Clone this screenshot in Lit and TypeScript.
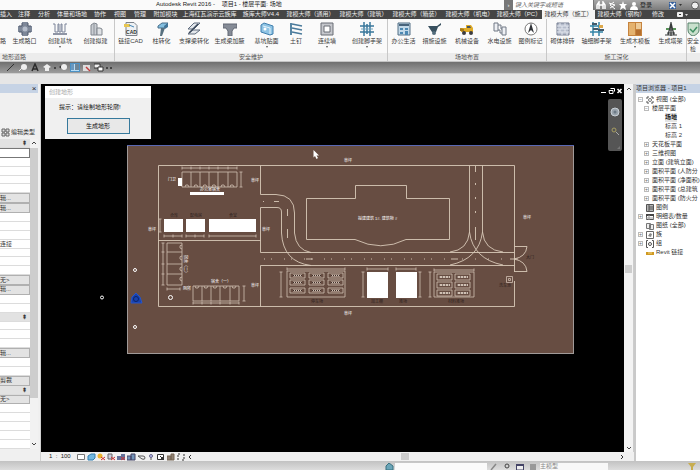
import { LitElement, html, css, svg, nothing } from "lit";
import { customElement, property } from "lit/decorators.js";
import { classMap } from "lit/directives/class-map.js";

const icons: Record<string, unknown> = {
  crossing: svg`<path d="M4 0h6v4h4v6h-4v4H4v-4H0V4h4z" fill="#7d8798"/><circle cx="7" cy="7" r="2.5" fill="#b5bdcb"/><path d="M4 1v3M10 1v3M1 4h3M10 4h3M1 10h3M10 10h3M4 10v3M10 10v3" stroke="#4d566b" fill="none"/>`,
  pit: svg`<path d="M0 2h2v8h3V2h1v8h2V2h1v8h3V2h2" fill="none" stroke="#7b8398"/><path d="M0 12h14" stroke="#6b7388" stroke-width="1.5"/>`,
  building: svg`<path d="M2 13V3l3-2 3 1v11z" fill="#c9cdd2" stroke="#80868e"/><path d="M8 13V6h3l2 1v6z" fill="#dfe2e5" stroke="#80868e"/><path d="M5 2v11" stroke="#8a9098"/>`,
  cad: svg`<path d="M2 .5h8l3 3v10H2z" fill="#eef1f4" stroke="#7d838b"/><path d="M0 2h6v3H0z" fill="#e8c650"/><path d="M5 3l5 2" stroke="#4687b8"/><text x="7.500" y="12" text-anchor="middle" font-size="5" font-weight="700" fill="#333">CAD</text>`,
  column: svg`<path d="M3 4l4-3h6l-3 3v2H3z" fill="#83bfe0" stroke="#496f8b"/><path d="M6 6h4L7 14H5z" fill="#57707f"/><path d="M9 4l4-3v4l-3 2z" fill="#427598"/>`,
  brace: svg`<path d="M1 7l6-6h6l-6 6zM1 12l5-4h7l-5 4z" fill="#e3e7ec" stroke="#5e6b7d"/><path d="M2 11l9-9" stroke="#3c4a5d" stroke-width="1.500"/>`,
  haunch: svg`<path d="M0 2h14v4h-3l-2 3v5H5V9L3 6H0z" fill="#858b96" stroke="#626975"/>`,
  facing: svg`<path d="M1 3l3-2 9 3v8l-3 1-9-3z" fill="#8fc4e4" stroke="#3f7fae"/><path d="M3 4l7 2v6" fill="none" stroke="#e4f2fa"/><circle cx="5" cy="7" r="1.500" fill="#fff"/>`,
  nail: svg`<path d="M2 1v12" stroke="#5886a4" stroke-width="2"/><path d="M3 2l10 2M3 6l10 2M3 10l10 2" stroke="#4a7a9b" stroke-width="1.500"/>`,
  wall: svg`<path d="M1 1h12v12H1z" fill="#c5c7cc" stroke="#686c75"/><path d="M4 4h6v6H4z" fill="#fff" stroke="#686c75"/>`,
  scaffold: svg`<path d="M4 0v14M10 0v14M0 4h14M0 10h14M7 2v10" stroke="#3a789c" stroke-width="1.500"/><path d="M1 7h12" stroke="#70a3bd"/>`,
  office: svg`<path d="M1 1h12v12H1z" fill="#c2d9e9" stroke="#526e84"/><path d="M2 3h10" stroke="#48647c" stroke-width="2"/><path d="M3 6h3v2H3zM8 6h3v2H8zM3 10h3v2H3zM8 9h3v4H8z" fill="#4d88b2"/>`,
  facility: svg`<path d="M0 4h9l4-3v2l-3 2-2 5H4z" fill="#38505f"/><circle cx="6" cy="11" r="2" fill="#526c7b"/>`,
  machine: svg`<path d="M1 6h5V3h5l2 3v4H1z" fill="#e0ac28"/><path d="M7 4h3l1 2H7z" fill="#465461"/><path d="M0 6l4 1v2H0z" fill="#a57917"/><circle cx="4" cy="11" r="2" fill="#3c3d40"/><circle cx="11" cy="11" r="2" fill="#3c3d40"/>`,
  hydro: svg`<path d="M1 1h4v8H1zM9 5h4v8H9zM5 3h3v4h1M5 8h2v3h2" fill="#eef0f4" stroke="#707885"/>`,
  north: svg`<circle cx="7" cy="7" r="6" fill="#fff" stroke="#777"/><path d="M7 1l3 10-3-3-3 3z" fill="#303338"/>`,
  masonry: svg`<path d="M1 1h12v12H1z" fill="#b5bccb" stroke="#767e92"/><path d="M1 4h12M1 7h12M1 10h12M4 1v3M9 1v3M6 4v3M11 4v3M4 7v3M9 7v3M6 10v3M11 10v3" stroke="#e1e5ed"/>`,
  plan: svg`<path d="M3 0v14M9 0v14M0 4h13M0 10h13" stroke="#3485a8" stroke-width="1.500"/><path d="M2 2h5M8 8h6M3 7h5" stroke="#43596a" stroke-width="2"/><path d="M9 3h4v3H9z" fill="#dda84b"/>`,
  formwork: svg`<path d="M0 0h14v14H0z" fill="#c6833e"/><path d="M1 1h6v12H1z" fill="#e4b26e"/><path d="M8 1h5v6H8z" fill="#eccb99"/><path d="M8 8h5v5H8z" fill="#b56f2e"/>`,
  tower: svg`<path d="M7 0v14M4 13l3-12 3 12M1 13h12M5 8h4M3 11h8" fill="none" stroke="#383c3c" stroke-width="1.200"/><path d="M2 7h3M9 7h3" stroke="#569257" stroke-width="2"/>`,
  check: svg`<path d="M2 1h11v7c0 3-3 5-6 6-3-1-5-3-5-6z" fill="#c9e0cd" stroke="#56816b"/><path d="M4 7l3 3 4-5" fill="none" stroke="#3f8f62" stroke-width="1.500"/>`,
};

@customElement("ribbon-tool")
export class RibbonTool extends LitElement {
  @property() icon = "";
  @property() label = "";
  @property({ type: Boolean }) menu = false;
  static styles = css`
    :host { display: block; flex: none; }
    button { display: flex; flex-direction: column; align-items: center; width: 100%; height: 100%; border: 0; padding: 3px 0 0; background: none; font: 6px/8px "Liberation Sans", "Noto Sans CJK SC", sans-serif; color: #3c3c3c; white-space: pre; }
    svg { width: 14px; height: 14px; margin-bottom: 1px; flex: none; }
    i { border: 1px solid transparent; border-top: 2px solid #555; border-bottom: 0; margin-top: 1px; }
  `;
  render() {
    return html`<button><svg viewBox="0 0 14 14">${icons[this.icon]}</svg><span>${this.label}</span>${this.menu ? html`<i></i>` : nothing}</button>`;
  }
}

type Tool = [icon: string, label: string, size: string, menu?: boolean];
const panels: { title: string; cls: string; tools: Tool[] }[] = [
  { title: "地形道路", cls: "first", tools: [["", "路", "cut"], ["crossing", "生成路口", "l"], ["pit", "创建基坑", "m", true], ["building", "创建拟建", "l"]] },
  { title: "安全维护", cls: "", tools: [["cad", "链接CAD", "s"], ["column", "柱转化", "s"], ["brace", "支撑梁转化", "m"], ["haunch", "生成梁加腋", "l"], ["facing", "基坑贴面", "l", true], ["nail", "土钉", "xs"], ["wall", "连续墙", "xl", true], ["scaffold", "创建脚手架", "xl", true]] },
  { title: "场地布置", cls: "", tools: [["office", "办公生活", "s"], ["facility", "措施设施", "s"], ["machine", "机械设备", "m"], ["hydro", "水电设施", "s"], ["north", "图例标记", "s"]] },
  { title: "施工深化", cls: "", tools: [["masonry", "砌体排砖", "s"], ["plan", "轴细脚手架", "l"], ["formwork", "生成木模板", "xl", true], ["tower", "生成塔架", "s"]] },
  { title: "", cls: "last", tools: [["check", "安全\n检", "edge"]] },
];

const tabs = ["插入", "注释", "分析", "体量和场地", "协作", "视图", "管理", "附加模块", "上海红瓦演示云族库", "族库大师V4.4", "建模大师（通用）", "建模大师（建筑）", "建模大师（箱装）", "建模大师（机电）", "建模大师（PC）", "建模大师（施工）", "建模大师（钢构）", "修改"];
const activeTab = "建模大师（施工）";

const props: [kind: string, text?: string][] = [
  ["head"], ["field"], ["row"], ["row"], ["row"], ["row"], ["btn", "辑..."], ["btn", "辑..."], ["row"], ["row"], ["row"],
  ["row", "连接"], ["row"], ["row"], ["row"], ["btn", "无>"], ["btn", "辑..."], ["row"], ["row"], ["head"], ["row"], ["row"], ["row"],
  ["btn", "辑..."], ["row"], ["row"], ["btn", "剪裁"], ["head"], ["btn", "无>"], ["row"], ["row"], ["row"], ["row"], ["row"],
];

type Node = [level: number, mark: string, glyph: string, text: string];
const tree: Node[] = [
  [0, "−", "views", "视图 (全部)"], [1, "−", "", "楼层平面"], [2, "", "", "场地"], [2, "", "", "标高 1"], [2, "", "", "标高 2"],
  [1, "+", "", "天花板平面"], [1, "+", "", "三维视图"], [1, "+", "", "立面 (建筑立面)"], [1, "+", "", "面积平面 (人防分"],
  [1, "+", "", "面积平面 (净面积)"], [1, "+", "", "面积平面 (总建筑"], [1, "+", "", "面积平面 (防火分"],
  [0, "", "legend", "图例"], [0, "+", "table", "明细表/数量"], [0, "", "sheet", "图纸 (全部)"], [0, "+", "family", "族"], [0, "+", "group", "组"], [0, "", "link", "Revit 链接"],
];
const treeGlyphs: Record<string, unknown> = {
  views: svg`<path d="M1 3V1h2M5 1h2v2M7 5v2H5M3 7H1V5" fill="none" stroke="#555"/><circle cx="4" cy="4" r="1.500" fill="none" stroke="#777"/>`,
  legend: svg`<path d="M.5.5h7v7h-7z" fill="#b5b5b5" stroke="#555"/><path d="M3 1v6M3 3h4M3 5h4" stroke="#555"/>`,
  table: svg`<path d="M.5 1.500h7v5h-7z" fill="#fff" stroke="#555"/><path d="M0 2h8" stroke="#444" stroke-width="2"/><path d="M3 2v5M0 5h8" stroke="#999"/>`,
  sheet: svg`<path d="M.5 1.500h4v5h-4zM3.500 2.500h4v5h-4z" fill="#eee" stroke="#777"/>`,
  family: svg`<path d="M.5.5h7v7h-7z" fill="#fff" stroke="#666"/><path d="M2 5l2-3 2 1-1 3z" fill="#888"/>`,
  group: svg`<path d="M2 .5H.5v7H2M6 .5h1.500v7H6" fill="none" stroke="#555"/><circle cx="4" cy="4" r="1.500" fill="none" stroke="#555"/>`,
  link: svg`<path d="M0 3h8v3H0z" fill="#d09a22"/><path d="M2 4h4" stroke="#f0d588"/>`,
};

const range = (n: number) => Array.from({ length: n }, (_, i) => i);
const at = (list: number[], draw: (v: number) => string) => list.map(draw).join("");

/* A dimension line with end ticks and optional inner ticks. */
const dimH = (y: number, xs: number[]) => `M${xs[0]} ${y}H${xs[xs.length - 1]}` + at(xs, (x) => `M${x} ${y - 1.5}v3`);
const dimV = (x: number, ys: number[]) => `M${x} ${ys[0]}V${ys[ys.length - 1]}` + at(ys, (y) => `M${x - 1.5} ${y}h3`);

const site = () => svg`
  <rect x="127.5" y="145.5" width="446" height="208" fill="#674d42" stroke="#a09a98"/>
  <path d="M127 145.500H574" stroke="#5968b4"/>
  <g fill="none" stroke="#d8c8b8" stroke-width="0.9">
    <path d="M514.500 246V165.500H158.500V306.500H514.500V281M158.500 240.500H260.500M260.500 165.500V194.500H276Q294.500 195 294.500 213V233Q296 250 311 252.500M260.500 252.500V207.500H277Q281.500 207.500 281.500 212V233Q283 262 311 265.500M260.500 252.500H514.500M514.500 265.500H260.500V306.500"/>
    <path d="M306.500 198.500H355.500V185.500H406.500V198.500H449.500V239.500H406Q381 252 355 239.500H306.500Z"/>
    <path d="M469.500 165.500V232Q468 250 450 252M469.500 232Q473 259 503 265M482.500 165.500V232Q484 250 503 252M482.500 232Q479 259 450 265"/>
    <path d="M514.500 246V272M514.500 246.500H527Q526 257 514 259Q526 261 527 271.500H514.500M510 259H518"/>
    <path d="M475.500 166v6M475.500 183v2M475.500 197v2M475.500 211v2M475.500 227v13M274 201.500h5M287.500 209v7M287.500 229v9M306 259h7M451 259h7M263 201.500h1"/>
    <path d="M264 259H450" stroke-dasharray="1 6 1 12"/>
    <path d="M462 259H510" stroke-dasharray="1 12"/>
  </g>
  <g fill="none" stroke="#d0c0b3" stroke-width="0.8">
    <path d="M182 172H237V187H182Z${at([191, 200, 209, 218, 228], (x) => `M${x} 172v15`)}${dimH(168, [182, 191, 200, 209, 218, 228, 237])}${dimV(241, [172, 187])}"/>
    <path d="${at([187, 196, 205, 214, 223, 232], (x) => `M${x - 2} 187q0 -3 3 -2l1 2`)}"/>
    <path d="M167 243H182V285H167Z${at([252, 264, 274], (y) => `M167 ${y}h15`)}${dimV(163, [243, 252, 264, 274, 285])}${dimH(289, [167, 180])}"/>
    <path d="${at([247, 258, 269, 279], (y) => `M182 ${y - 2}q-3 0 -2 3l2 1`)}"/>
    <path d="M193 286H239V301H193Z${at([202, 211, 220, 230], (x) => `M${x} 286v15`)}${dimH(303, [193, 202, 211, 220, 230, 239])}${dimV(244, [286, 301])}"/>
    <path d="${at([197, 206, 215, 225, 234], (x) => `M${x - 2} 286q0 3 3 2l1 -2`)}"/>
    <path d="${dimV(160, [219, 232])}${dimH(236, [164, 173, 182])}${dimH(236, [186, 195, 204])}${dimH(236, [209, 256])}"/>
    <path d="M287 271H345V297H287Z${dimH(269, [287, 345])}${dimV(281, [272, 297])}"/>
    <path d="M434 272H474V297H434Z${dimH(270, [434, 474])}${dimV(430, [272, 297])}"/>
    <path d="${dimH(269, [367, 388])}${dimH(269, [396, 416])}${dimV(363, [272, 297])}${dimV(420, [272, 297])}"/>
    <path d="M506.500 276.500h6v6h-6zM508.500 278.500h2v2h-2z"/>
    ${range(9).map((i) => svg`<g transform="translate(${290 + (i % 3) * 19} ${[273, 280, 288][Math.floor(i / 3)]})"><path d="M0 0h15v5h-15z"/><path d="M3 2.500h9" stroke-width="2"/><path d="M3 2.500h9" stroke="#3d2d28" stroke-width="1" stroke-dasharray="1 1"/></g>`)}
    ${range(6).map((i) => svg`<g transform="translate(${437 + (i % 2) * 18} ${274 + Math.floor(i / 2) * 8})"><path d="M0 0h15v6h-15z"/><path d="M2 3h11" stroke-width="2"/><path d="M2 3h11" stroke="#3d2d28" stroke-width="1" stroke-dasharray="1 2"/></g>`)}
  </g>
  <path d="M178 178h4v8h-4zM190 192h34v3h-34zM164 219h19v13h-19zM186 219h19v13h-19zM209 219h47v13h-47zM367 272h21v26h-21zM396 272h21v26h-21z" fill="#fff"/>
  <g class="note">
    <text x="344" y="162">草坪</text><text x="523" y="219">草坪</text><text x="344" y="315">草坪</text><text x="251" y="182">草坪</text>
    <text x="148" y="231">草坪</text><text x="262" y="231">草坪</text><text x="251" y="287">草坪</text><text x="168" y="181">门卫</text>
    <text x="200" y="191">办公室宿舍</text><text x="211" y="283">宿舍（一）</text>
    <text x="358" y="220">拟建建筑 1#. 建筑物 #</text>
    <text transform="translate(184 255) rotate(90)">宿舍（二）</text><text x="183" y="290">厕所</text>
  </g>
  <g class="note dark">
    <text x="170" y="217">仓库</text><text x="190" y="217">配电房</text><text x="229" y="217">食堂</text><text x="311" y="303">停车场</text>
    <text x="371" y="303">加工棚</text><text x="399" y="303">堆场</text><text x="448" y="303">材料堆场</text><text x="499" y="287">洗车池</text><text x="526" y="259">大门</text>
  </g>
  <g fill="#674d42" stroke="#fff"><circle cx="135" cy="270" r="1.5"/><circle cx="135" cy="327" r="1.5"/><circle cx="102" cy="297.500" r="1.5" fill="#000"/><circle cx="170.500" cy="297.500" r="2"/></g>
  <path d="M131 303L132 297L136 293L140 297L142 303Z" fill="#1741ae" stroke="#2655c8"/><circle cx="136" cy="299" r="2.500" fill="none" stroke="#0b2468"/>
  <path d="M313.500 150V157.500L315 156L316.500 159L318 158L316.500 155.500H319Z" fill="#fff"/>
`;

@customElement("app-root")
export class AppRoot extends LitElement {
  static styles = css`
    * { box-sizing: border-box; }
    :host { display: flex; flex-direction: column; min-height: 100vh; background: #f0f0f0; color: #333; font: 6px/9px "Liberation Sans", "Noto Sans CJK SC", sans-serif; white-space: nowrap; overflow: hidden; }
    button, input, select { font: inherit; color: inherit; border: 0; padding: 0; margin: 0; border-radius: 0; background: none; }
    svg { display: block; flex: none; }
    .title { display: flex; height: 10px; background: #fafafa; }
    .title h1 { flex: 1; margin: 0; padding-left: 156px; font-size: 6px; line-height: 9px; font-weight: 400; color: #222; white-space: pre; }
    .search { display: flex; width: 90px; background: #777; }
    .search button { width: 9px; color: #fff; line-height: 9px; }
    .search input { width: 80px; padding-left: 2px; background: #fff; font-style: italic; }
    .search input::placeholder { color: #666; }
    .account { display: flex; align-items: center; width: 106px; padding-left: 2px; gap: 1px; background: linear-gradient(#a8a8a8, #7b7b7b); }
    .account svg { width: 10px; height: 9px; }
    .account button { color: #222; }
    .account .push { margin-left: auto; }
    .tabs { display: grid; grid-template-columns: 14px 20px 20px 36px 20px 20px 20px 31px 57px 46px repeat(4, 53px) 46px 53px 53px 20px 1fr; height: 9px; background: #454545; }
    .tabs button { color: #ededed; text-align: center; line-height: 9px; }
    .tabs button.on { background: #f4f4f4; color: #333; }
    .tabs button:first-child { text-align: left; }
    .tabs svg { width: 12px; height: 9px; margin-left: 8px; }
    .ribbon { display: flex; height: 43px; background: #fafafa; overflow: hidden; border-bottom: 1px solid #c4c4c4; }
    .panel { display: flex; flex-direction: column; flex: none; border-right: 1px solid #c8c8c8; }
    .panel.last { flex: 1 0 0; min-width: 0; border: 0; }
    .tools { display: flex; flex: 1; }
    .panel h2 { margin: 0; height: 8px; font-size: 6px; line-height: 8px; font-weight: 400; text-align: center; background: #ececec; color: #555; }
    .panel.first h2 { padding-left: 2px; text-align: left; }
    .cut { width: 6px; overflow: hidden; } .edge { width: 12px; }
    .xs { width: 22px; } .s { width: 31px; } .m { width: 34px; } .l { width: 37px; } .xl { width: 40px; }
    .quick { display: flex; align-items: center; gap: 2px; height: 11px; padding-left: 6px; background: linear-gradient(#6f6f6f, #9d9d9d); color: #333; }
    .quick svg { width: 10px; height: 9px; }
    .quick .on { background: #b7dcf5; outline: 1px solid #4c91c4; outline-offset: -1px; }
    .quick i { width: 2px; height: 2px; background: #444; }
    .strip { height: 11px; background: #e6e6e6; border-top: 1px solid #cfcfcf; }
    .work { display: grid; grid-template-columns: 41px minmax(0, 1fr) 66px; flex: 1; }
    .props { display: flex; flex-direction: column; padding: 0 2px 12px 0; border-right: 1px solid #d0d0d0; }
    .bar { display: flex; height: 9px; background: #c6d3e5; }
    .bar h2 { flex: 1; margin: 0; font-size: 6px; line-height: 9px; font-weight: 400; }
    .bar button { width: 8px; color: #222; font-size: 8px; line-height: 8px; }
    .type { display: flex; align-items: center; justify-content: flex-end; height: 46px; padding: 33px 3px 0 0; gap: 1px; }
    .type svg { width: 9px; height: 9px; }
    .sheet { display: flex; flex: 1; }
    .rows { display: flex; flex-direction: column; flex: 1; min-width: 0; }
    .rows > * { flex: 1 1 0; min-height: 0; width: 100%; overflow: hidden; background: #fff; border-bottom: 1px solid #dcdcdc; line-height: 8px; }
    .rows .head { background: #e2e2e2; text-align: right; padding-right: 3px; font-weight: 700; }
    .rows .field { border: 1px solid #777; border-left: 0; }
    .rows .btn { background: #e3e3e3; border: 1px solid #b0b0b0; border-left: 0; text-align: left; line-height: 7px; }
    .scroll { display: flex; flex-direction: column; align-items: center; width: 8px; background: #f2f2f2; color: #444; }
    .scroll svg { width: 8px; height: 9px; }
    .scroll .thumb { width: 100%; background: #cdcdcd; }
    .scroll .tall { flex: 6; } .scroll .rest { flex: 1; }
    .center { display: flex; flex-direction: column; }
    .stage { display: flex; flex: 1; }
    .canvas { position: relative; flex: 1; min-width: 0; background: #000; }
    .drawing { width: 100%; height: auto; }
    .note { fill: #fff; font-size: 4px; } .note.dark { fill: #2e211d; }
    .dialog { position: absolute; left: 4px; top: 2px; width: 106px; height: 53px; background: #f0f0f0; text-align: center; }
    .dialog h2 { margin: 0; height: 12px; padding-left: 4px; background: #fff; color: #aaa; font-size: 6px; line-height: 12px; font-weight: 400; text-align: left; }
    .dialog p { margin: 0; padding: 5px 0 6px 14px; text-align: left; color: #111; }
    .dialog button { width: 63px; height: 16px; border: 1px solid #36799c; background: #e8e8e8; color: #111; }
    .win { position: absolute; right: 0; top: 3px; display: flex; }
    .win svg { width: 8px; height: 8px; }
    .nav { position: absolute; right: 2px; top: 15px; width: 14px; height: 52px; background: #555; border-radius: 2px; }
    .vs { width: 10px; background: #f3f3f3; border-right: 1px solid #ccc; }
    .vs .gap { flex: 172; } .vs .below { flex: 170; } .vs .thumb { flex: none; height: 8px; width: 7px; }
    .view { display: flex; align-items: center; height: 9px; padding-left: 8px; background: #f0f0f0; }
    .view .scale { width: 28px; white-space: pre; color: #222; }
    .view svg { width: 9px; height: 8px; margin-right: 1px; }
    .view .track { flex: 1; display: flex; align-items: center; }
    .view .before { flex: 211; } .view .after { flex: 215; }
    .view .thumb { width: 8px; height: 7px; background: #ccc; }
    .view .end { margin-right: 8px; }
    .browser { background: #fff; border-left: 2px solid #c9c9c9; overflow: hidden; }
    .browser ul { margin: 0; padding: 2px 0 0 1px; list-style: none; }
    .browser li { display: flex; align-items: center; height: 9px; }
    .browser li svg { width: 8px; height: 8px; margin-right: 2px; }
    .browser .mark { width: 5px; height: 5px; margin: 0 3px 0 1px; border: 1px solid #bbb; font-size: 5px; line-height: 3px; color: #666; flex: none; }
    .browser .mark.none { border-color: transparent; }
    .browser .lv1 { padding-left: 6px; } .browser .lv2 { padding-left: 19px; }
    .sel { background: #e4e4e4; font-weight: 700; color: #222; }
    .status { display: flex; align-items: flex-end; height: 9px; padding-left: 385px; background: linear-gradient(#c2c2c2, #ddd); }
    .status svg { width: 10px; height: 7px; }
    .status input { width: 92px; height: 7px; background: #fafafa; }
    .status select { appearance: none; width: 68px; height: 7px; line-height: 7px; background: #f8f8f8; color: #888; }
    .status .ico { display: flex; width: 53px; justify-content: space-around; }
    .status .filter { margin: 0 3px 0 auto; }
  `;

  private chevron(d: string) {
    return html`<svg viewBox="0 0 8 9"><path d=${d} fill="none" stroke="#444"/></svg>`;
  }

  private ribbon() {
    return html`<section class="ribbon">${panels.map((p) => html`
      <div class="panel ${p.cls}"><div class="tools">${p.tools.map(([icon, label, size, menu]) => html`<ribbon-tool class=${size} icon=${icon} label=${label} ?menu=${menu}></ribbon-tool>`)}</div><h2>${p.title}</h2></div>`)}</section>`;
  }

  private property([kind, text]: [string, string?]) {
    if (kind === "field") return html`<input class="field" aria-label="类型">`;
    if (kind === "btn") return html`<button class="btn">${text}</button>`;
    return html`<div class=${kind}>${kind === "head" ? "⇞" : text}</div>`;
  }

  render() {
    return html`
      <header class="title">
        <h1>Autodesk Revit 2016 -    项目1 - 楼层平面: 场地</h1>
        <div class="search"><button aria-label="展开">›</button><input aria-label="搜索" placeholder="键入关键字或短语"></div>
        <div class="account">
          <svg viewBox="0 0 10 9"><path d="M1 8V4l2-3v7M9 8V4L7 1v7M3 4h4" fill="none" stroke="#fff" stroke-width="1.500"/></svg>
          <svg viewBox="0 0 10 9"><path d="M2 2l6 2-5 3M7 1L3 4l5 4" fill="none" stroke="#fff"/></svg>
          <svg viewBox="0 0 10 9"><path d="M5 0l1 3h3L7 5l1 4-3-2-3 2 1-4-2-2h3z" fill="#fff"/></svg>
          <svg viewBox="0 0 10 9"><circle cx="5" cy="3" r="2" fill="#fff"/><path d="M1 9q0-4 4-4t4 4z" fill="#fff"/></svg>
          <button>登录</button>
          <svg class="push" viewBox="0 0 10 9"><path d="M1 1h7v7H1z" fill="#36609b"/><path d="M2 2l5 5M7 2L2 7" stroke="#fff" stroke-width="1.500"/></svg>
          <svg viewBox="0 0 10 9"><path d="M0 3h3L1.500 5z" fill="#333"/></svg>
          <svg viewBox="0 0 10 9"><circle cx="5" cy="4.500" r="3.500" fill="#eee" stroke="#555"/></svg>
        </div>
      </header>
      <nav class="tabs">
        ${tabs.map((t) => html`<button class=${classMap({ on: t === activeTab })}>${t}</button>`)}
        <svg viewBox="0 0 12 9"><rect x="1" y="2" width="6" height="5" rx="1" fill="#eee"/><path d="M3 4h2v1H3z" fill="#333"/><path d="M9 4h3l-1.500 2z" fill="#ddd"/></svg>
      </nav>
      ${this.ribbon()}
      <div class="quick">
        <svg viewBox="0 0 10 9"><path d="M1 8l7-7" stroke="#333"/></svg>
        <svg viewBox="0 0 10 9"><circle cx="6" cy="4" r="3" fill="#eee"/><path d="M1 8l4-4" stroke="#eee"/></svg>
        <svg viewBox="0 0 10 9"><path d="M2 8l3-7 3 7M3 6h4" fill="none" stroke="#2b2b2b" stroke-width="1.500"/></svg>
        <svg viewBox="0 0 10 9"><path d="M1 4l4-3 4 3-2 1v3H3V5z" fill="#eee"/></svg><i></i>
        <svg viewBox="0 0 10 9"><path d="M1 4l4-3v6z" fill="#333"/><circle cx="6" cy="4" r="3" fill="#eee"/></svg>
        <svg class="on" viewBox="0 0 10 9"><path d="M1 2h3M1 4h3M1 6h3" stroke="#1c548b"/><path d="M5 2h4M5 4h4M5 6h4" stroke="#27313c"/></svg>
        <svg viewBox="0 0 10 9"><path d="M1 2h7v6H1z" fill="#ddd"/><path d="M4 4l4 4" stroke="#c13d3d" stroke-width="1.500"/></svg>
        <svg viewBox="0 0 10 9"><path d="M0 1h6v4H0z" fill="#eee" stroke="#333"/><path d="M4 4h5v4H4z" fill="#fff" stroke="#333"/></svg><i></i><i></i>
      </div>
      <div class="strip"></div>
      <main class="work">
        <aside class="props">
          <div class="bar"><h2></h2><button aria-label="关闭">×</button></div>
          <div class="type"><svg viewBox="0 0 9 9"><path d="M1 1h3v3H1zM5 1h3v3H5zM1 5h3v3H1zM5 5h3v3H5z" fill="#ddd" stroke="#666"/></svg><button>编辑类型</button></div>
          <div class="sheet">
            <div class="rows">${props.map((p) => this.property(p))}</div>
            <div class="scroll">${this.chevron("M2 5l2-2 2 2")}<div class="thumb tall"></div><div class="rest"></div>${this.chevron("M2 3l2 2 2-2")}</div>
          </div>
        </aside>
        <section class="center">
          <div class="stage">
            <div class="canvas">
              <svg class="drawing" viewBox="41 84 583 368">${site()}</svg>
              <div class="dialog"><h2>创建地形</h2><p>提示：请绘制地形轮廓!</p><button>生成地形</button></div>
              <div class="win">
                <svg viewBox="0 0 8 8"><path d="M1 5.500h5" stroke="#fff"/></svg>
                <svg viewBox="0 0 8 8"><path d="M2.500 1.500h4v3M1 3.500h4v3H1.500z" fill="none" stroke="#fff"/></svg>
                <svg viewBox="0 0 8 8"><path d="M1.500 2l4 4M5.500 2l-4 4" stroke="#fff" stroke-width="1.500"/></svg>
              </div>
              <svg class="nav" viewBox="0 0 14 52"><circle cx="7" cy="13" r="4" fill="#9aa4ad" stroke="#c8d0d6"/><circle cx="7" cy="13" r="1.500" fill="#6c7a86"/><circle cx="6" cy="31" r="2" fill="none" stroke="#a79d62"/><path d="M8 33l3 3" stroke="#aaa"/><path d="M9 50h3v-3z" fill="#777"/></svg>
            </div>
            <div class="scroll vs">${this.chevron("M2 6l2-2 2 2")}<div class="gap"></div><div class="thumb"></div><div class="below"></div>${this.chevron("M2 4l2 2 2-2")}</div>
          </div>
          <div class="view">
            <span class="scale">1  :  100</span>
            <svg viewBox="0 0 9 8"><path d="M.5 1.500h7v5h-7z" fill="#fff" stroke="#777"/></svg>
            <svg viewBox="0 0 9 8"><path d="M1 3l3-2h4v4L6 7H1z" fill="#71b7df" stroke="#337faf"/></svg>
            <svg viewBox="0 0 9 8"><circle cx="3" cy="3" r="2.500" fill="#edb42d"/><path d="M4 4l4 3M8 4L4 7" stroke="#c33"/></svg>
            <svg viewBox="0 0 9 8"><path d="M1 1h4v5H1z" fill="#ccd" stroke="#666"/><path d="M4 4l4 3M8 4L4 7" stroke="#c33"/></svg>
            <svg viewBox="0 0 9 8"><path d="M0 3h5v4H0zM4 1h4v6H4z" fill="#637199"/><path d="M4 4l4 3M8 4L4 7" stroke="#c33"/></svg>
            <svg viewBox="0 0 9 8"><path d="M0 3h4v4H0zM4 1h4v6H4z" fill="#7294b8" stroke="#446"/></svg>
            <svg viewBox="0 0 9 8"><path d="M1 3h5q2 0 2 2t-3 1L1 3" fill="none" stroke="#555"/></svg>
            <svg viewBox="0 0 9 8"><circle cx="4" cy="3" r="1.500" fill="#bbe" stroke="#668"/><path d="M4 5v2" stroke="#555"/></svg>
            <svg viewBox="0 0 9 8"><path d="M.5 1.500h6v5h-6z" fill="#fff" stroke="#333"/><path d="M3 3l4 4M7 3L3 7" stroke="#333"/></svg>
            <svg viewBox="0 0 9 8"><path d="M0 3h4v4H0zM4 1h3v6H4z" fill="#8e8072" stroke="#765"/></svg>
            <svg viewBox="0 0 9 8"><path d="M1 7V1h3M5 7h2V1" fill="none" stroke="#333" stroke-dasharray="2 1"/></svg>
            <svg viewBox="0 0 9 8"><path d="M4 2L2 4l2 2" fill="none" stroke="#333"/></svg>
            <div class="track"><span class="before"></span><span class="thumb"></span><span class="after"></span></div>
            <svg class="end" viewBox="0 0 9 8"><path d="M4 2l2 2-2 2" fill="none" stroke="#333"/></svg>
          </div>
        </section>
        <aside class="browser">
          <div class="bar"><h2>项目浏览器 - 项目1</h2></div>
          <ul>${tree.map(([level, mark, glyph, text]) => html`<li class="lv${level}">
            <button class=${classMap({ mark: true, none: !mark })} aria-label=${text}>${mark}</button>${glyph ? html`<svg viewBox="0 0 8 8">${treeGlyphs[glyph]}</svg>` : nothing}<span class=${classMap({ sel: text === "场地" })}>${text}</span></li>`)}</ul>
        </aside>
      </main>
      <footer class="status">
        <svg viewBox="0 0 10 7"><path d="M1 7V3l3-3 4 3v4z" fill="#6ba5b8" stroke="#39717f"/></svg>
        <input aria-label="工作集">
        <span class="ico">
          <svg viewBox="0 0 10 7"><path d="M2 7l5-6" stroke="#888" stroke-width="1.500"/></svg>
          <svg viewBox="0 0 10 7"><circle cx="5" cy="3" r="2" fill="none" stroke="#444"/></svg>
          <svg viewBox="0 0 10 7"><path d="M1.500 1.500h7V7h-7z" fill="#eee" stroke="#446"/><path d="M1 2h8" stroke="#446" stroke-width="2"/></svg>
          <svg viewBox="0 0 10 7"><path d="M2 1h6v6H2z" fill="#999"/></svg>
        </span>
        <select aria-label="设计选项"><option>主模型</option></select>
        <svg class="filter" viewBox="0 0 10 7"><path d="M1 0h8L6 4v3H4V4z" fill="#c7ad50"/></svg>
      </footer>
    `;
  }
}
